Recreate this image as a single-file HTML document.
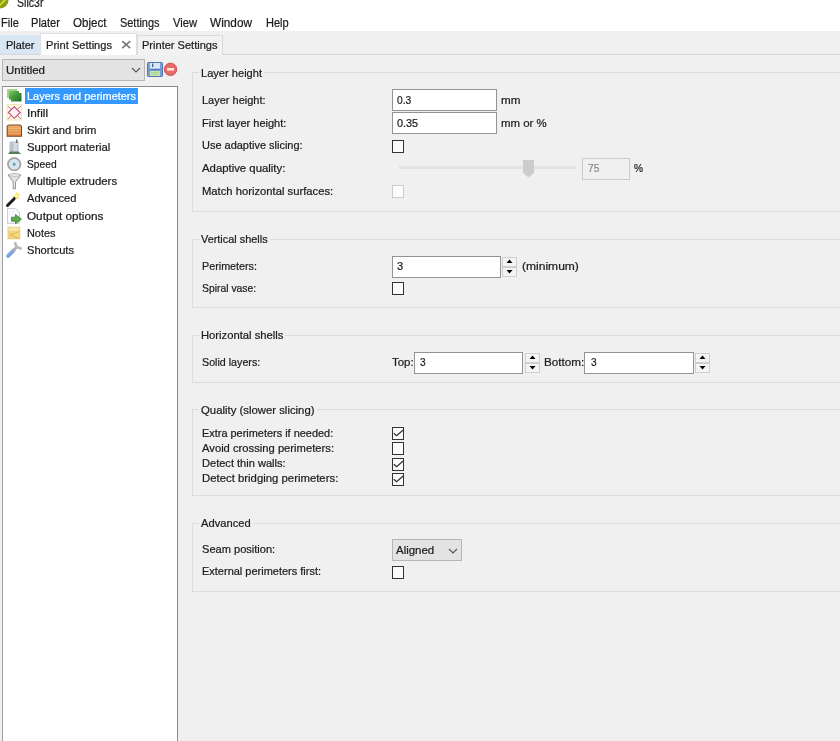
<!DOCTYPE html>
<html><head><meta charset="utf-8">
<style>
*{box-sizing:border-box}
html,body{margin:0;padding:0;width:840px;height:741px;overflow:hidden;background:#f0f0f0;font-family:"Liberation Sans",sans-serif;font-size:11px;color:#1c1c1c}
.a{position:absolute}
.t{position:absolute;white-space:nowrap;line-height:13px;font-size:11px;transform-origin:0 0;-webkit-text-stroke:0.22px currentColor}
.gtb{position:absolute;height:13px;background:#f0f0f0}
.gb{position:absolute;border:1px solid #dcdcdc;left:192px;width:700px}
.gt{position:absolute;background:#f0f0f0;padding:0 4px 0 2px;white-space:nowrap;line-height:13px;-webkit-text-stroke:0.12px currentColor}
.tb{position:absolute;background:#fff;border:1px solid #939393}
.cb{position:absolute;width:12px;height:13px;border:1px solid #333;background:#fbfbfb}
.ic{filter:blur(0.25px)}
.sp{position:absolute;width:14px;border:1px solid #d0d0d0;background:#f0f0f0}
</style></head><body>
<!-- title + menu -->
<div class="a" style="left:0;top:0;width:840px;height:31px;background:#fff"></div>
<svg class="a" style="left:0;top:0" width="10" height="10"><circle cx="0" cy="0" r="8.5" fill="#8c9a12"/><path d="M-2 7 L7 -2" stroke="#c9d23c" stroke-width="2.2"/></svg>
<div class="t" style="left:17px;top:-3px;transform:scaleX(0.8800);font-size:12px">Slic3r</div>
<div class="t" style="left:1px;top:17px;transform:scaleX(0.9200);font-size:12px">File</div>
<div class="t" style="left:31px;top:17px;transform:scaleX(0.9248);font-size:12px">Plater</div>
<div class="t" style="left:73px;top:17px;transform:scaleX(0.9629);font-size:12px">Object</div>
<div class="t" style="left:120px;top:17px;transform:scaleX(0.9110);font-size:12px">Settings</div>
<div class="t" style="left:173px;top:17px;transform:scaleX(0.9303);font-size:12px">View</div>
<div class="t" style="left:210px;top:17px;transform:scaleX(0.9839);font-size:12px">Window</div>
<div class="t" style="left:266px;top:17px;transform:scaleX(0.9200);font-size:12px">Help</div>

<!-- tabs -->
<div class="a" style="left:0;top:54px;width:840px;height:1px;background:#d9d9d9"></div>
<div class="a" style="left:0;top:35px;width:41px;height:19px;background:#d9e7f4"></div>
<div class="t" style="left:6px;top:39px;transform:scaleX(0.9913)">Plater</div>
<div class="a" style="left:40px;top:33px;width:97px;height:22px;background:#fff;border:1px solid #e0e0e0;border-bottom:none"></div>
<div class="t" style="left:46px;top:39px;transform:scaleX(1.0088)">Print Settings</div>
<svg class="a" style="left:121px;top:40px" width="11" height="10"><path d="M1.2 1.2 L9.2 8.2 M9.2 1.2 L1.2 8.2" stroke="#7a7a7a" stroke-width="1.7"/></svg>
<div class="a" style="left:137px;top:35px;width:86px;height:20px;border:1px solid #d9d9d9;border-bottom:none;background:#f2f2f2"></div>
<div class="t" style="left:142px;top:39px;transform:scaleX(1.0039)">Printer Settings</div>

<!-- left panel -->
<div class="a" style="left:2px;top:59px;width:143px;height:22px;border:1px solid #b6b6b6;background:#e3e3e3"></div>
<div class="t" style="left:6px;top:64px;transform:scaleX(1.0457)">Untitled</div>
<svg class="a" style="left:131px;top:67px" width="10" height="6"><path d="M1 1 L5 5 L9 1" fill="none" stroke="#555" stroke-width="1.1"/></svg>
<!-- save icon -->
<svg class="a ic" style="left:146px;top:61px" width="18" height="17">
<rect x="1.5" y="1.5" width="15" height="14" rx="0.8" fill="#7b9ed6" stroke="#5076b4" stroke-width="1"/>
<rect x="4" y="2" width="10" height="5.5" fill="#d8e8f8"/>
<rect x="6" y="2.5" width="1.3" height="3.5" fill="#47628c"/>
<rect x="3.5" y="8" width="11" height="1.2" fill="#5a7cb8"/>
<rect x="4" y="10" width="10" height="5" fill="#c6e6b0"/>
<path d="M5 11.5 H13 M5 13.3 H13" stroke="#9cc886" stroke-width="0.6"/>
</svg>
<svg class="a ic" style="left:163px;top:62px" width="15" height="15">
<circle cx="7.5" cy="7.3" r="6.2" fill="#e66a6a" stroke="#d55050" stroke-width="1"/>
<rect x="4" y="6" width="7" height="2.6" fill="#fbe6dc"/>
</svg>
<div class="a" style="left:2px;top:86px;width:176px;height:700px;border:1px solid #8a8a8a;border-left-color:#a0a0a0;background:#fff"></div>
<div class="a" style="left:25px;top:88px;width:113px;height:16px;background:#3399ff"></div>
<div class="t" style="left:27px;top:90px;transform:scaleX(0.9959);color:#fff">Layers and perimeters</div>
<div class="t" style="left:27px;top:107px;transform:scaleX(1.0735)">Infill</div>
<div class="t" style="left:27px;top:124px;transform:scaleX(1.0212)">Skirt and brim</div>
<div class="t" style="left:27px;top:141px;transform:scaleX(1.0320)">Support material</div>
<div class="t" style="left:27px;top:158px;transform:scaleX(0.9305)">Speed</div>
<div class="t" style="left:27px;top:175px;transform:scaleX(1.0377)">Multiple extruders</div>
<div class="t" style="left:27px;top:192px;transform:scaleX(1.0115)">Advanced</div>
<div class="t" style="left:27px;top:210px;transform:scaleX(1.0662)">Output options</div>
<div class="t" style="left:27px;top:227px;transform:scaleX(0.9913)">Notes</div>
<div class="t" style="left:27px;top:244px;transform:scaleX(1.0114)">Shortcuts</div>
<!-- icons -->
<svg class="a ic" style="left:0;top:80px" width="30" height="185" viewBox="0 80 30 185">
<defs>
<linearGradient id="gr" x1="0" y1="0" x2="1" y2="1"><stop offset="0" stop-color="#9fd28a"/><stop offset="0.5" stop-color="#4aa040"/><stop offset="1" stop-color="#1f6e22"/></linearGradient>
<linearGradient id="or" x1="0" y1="0" x2="0" y2="1"><stop offset="0" stop-color="#f0b070"/><stop offset="1" stop-color="#e0823a"/></linearGradient>
<linearGradient id="bl" x1="0" y1="0" x2="1" y2="1"><stop offset="0" stop-color="#a8c8f0"/><stop offset="1" stop-color="#5a86d0"/></linearGradient>
</defs>
<!-- layers -->
<path d="M7 89 H17 V91 H19 V93 H21.5 V101.5 H11 V99.5 H9 V97.5 H7 Z" fill="url(#gr)"/>
<path d="M7 89 H17 V91 H9 V97.5 H7 Z" fill="#a8d890" opacity="0.8"/>
<!-- infill -->
<rect x="7" y="104.5" width="14.5" height="15.5" fill="#fffbe6" stroke="#f3e6b0" stroke-width="1"/>
<path d="M14.3 106.8 L20.2 112.5 L14.3 118.3 L8.3 112.5 Z" fill="#fdf3f6" stroke="#c04a78" stroke-width="1.1"/>
<path d="M7.8 106 L11.3 109.5 M20.8 106 L17.3 109.5 M7.8 119 L11.3 115.5 M20.8 119 L17.3 115.5" stroke="#c4668a" stroke-width="1"/>
<!-- skirt -->
<path d="M7.2 127 Q7.2 125 9.5 125 H19.5 Q21.5 125 21.5 127 V136.3 H7.2 Z" fill="url(#or)" stroke="#7a4a20" stroke-width="1.1"/>
<path d="M8 128.5 H21 M8 131 H21 M8 133.5 H21" stroke="#f5c08a" stroke-width="0.6"/>
<!-- support -->
<rect x="10" y="142" width="8" height="10.5" fill="#d4dbe8" stroke="#a8b0be" stroke-width="0.8"/>
<rect x="10.5" y="143" width="3" height="9" fill="#b8c0cc"/>
<rect x="16" y="139.5" width="1.5" height="3.5" fill="#707070"/>
<path d="M8 154 L10 151.5 H18.5 L21 154 Z" fill="#5a7a5a"/>
<!-- speed -->
<circle cx="14.2" cy="164.2" r="6.2" fill="#dfe6ea" stroke="#a8a8a8" stroke-width="1.9"/>
<circle cx="14.2" cy="164.2" r="4" fill="#cfe6f2"/>
<path d="M13.2 162.2 L16.2 164.2 L13.2 166.3 Z" fill="#5f8fb0"/>
<!-- funnel -->
<path d="M8 175 Q14.5 172.5 21 175 L15.5 182 V188.8 H13.2 V182 Z" fill="#e4e4e4" stroke="#8c8c8c" stroke-width="0.9"/>
<ellipse cx="14.5" cy="175" rx="5.5" ry="1.3" fill="#f4f4f4" stroke="#9a9a9a" stroke-width="0.6"/>
<!-- wand -->
<path d="M7.5 205.5 L15 198" stroke="#1a1a1a" stroke-width="3" stroke-linecap="round"/>
<path d="M16.5 191.5 L17.3 194.5 L20.5 194 L18 196 L20 198.8 L17 197.6 L15.5 200.3 L15.2 197.3 L12.4 196.4 L15.2 195 Z" fill="#f8dc40"/>
<circle cx="16.4" cy="196" r="1.5" fill="#fff7c0"/>
<!-- output -->
<path d="M7.5 208.5 H15.5 L19.5 212.5 V223.3 H7.5 Z" fill="#f7f8fb" stroke="#c4c8d0" stroke-width="0.9"/>
<path d="M11.5 217.2 H15.5 V214.5 L21.5 219.2 L15.5 223.8 V221.2 H11.5 Z" fill="#5aac4a" stroke="#357a2a" stroke-width="0.7"/>
<!-- notes -->
<rect x="8" y="227.2" width="11.8" height="11.6" fill="#f5d684" stroke="#e3c063" stroke-width="0.8"/>
<rect x="8.4" y="227.6" width="11" height="3" fill="#f8e6b0"/>
<path d="M19 231.5 L10 235 L19 238.5" fill="none" stroke="#e0b84a" stroke-width="1"/>
<!-- wrench -->
<path d="M8 255.8 L13.5 250.3" stroke="url(#bl)" stroke-width="4" stroke-linecap="round"/>
<path d="M12.8 251 L16.8 247" stroke="#aeb2ba" stroke-width="2.8"/>
<path d="M15.2 243.2 L16.8 247 L20.8 248.4" fill="none" stroke="#b4b8c0" stroke-width="2.6" stroke-linecap="round" stroke-linejoin="round"/>
</svg>
<!-- group 1 -->
<div class="gb" style="top:72px;height:140px"></div>
<div class="gtb" style="left:199px;top:67px;width:65.0px"></div><div class="t" style="left:201px;top:67px;transform:scaleX(1.0075)">Layer height</div>
<div class="t" style="left:202px;top:94px;transform:scaleX(0.9983)">Layer height:</div>
<div class="t" style="left:202px;top:117px;transform:scaleX(0.9991)">First layer height:</div>
<div class="t" style="left:202px;top:139px;transform:scaleX(0.9971)">Use adaptive slicing:</div>
<div class="t" style="left:202px;top:162px;transform:scaleX(1.0320)">Adaptive quality:</div>
<div class="t" style="left:202px;top:185px;transform:scaleX(1.0219)">Match horizontal surfaces:</div>
<div class="tb" style="left:392px;top:89px;width:105px;height:22px"></div>
<div class="t" style="left:397px;top:94px;transform:scaleX(0.9283)">0.3</div>
<div class="t" style="left:501px;top:94px;transform:scaleX(1.0600)">mm</div>
<div class="tb" style="left:392px;top:112px;width:105px;height:22px"></div>
<div class="t" style="left:397px;top:117px;transform:scaleX(0.9850)">0.35</div>
<div class="t" style="left:501px;top:117px;transform:scaleX(1.0386)">mm or %</div>
<div class="cb" style="left:392px;top:140px"></div>
<div class="a" style="left:399px;top:166px;width:177px;height:3px;background:#e3e3e3"></div>
<svg class="a" style="left:523px;top:160px" width="11" height="18"><path d="M0 0 H11 V13 L5.5 17.5 L0 13 Z" fill="#cccccc"/></svg>
<div class="a" style="left:582px;top:158px;width:48px;height:22px;border:1px solid #cccccc;background:#f0f0f0"></div>
<div class="t" style="left:588px;top:162px;transform:scaleX(0.9306);color:#8a8a8a">75</div>
<div class="t" style="left:634px;top:162px;transform:scaleX(0.9201)">%</div>
<div class="a" style="left:392px;top:185px;width:12px;height:13px;border:1px solid #cccccc;background:#fcfcfc"></div>

<!-- group 2 -->
<div class="gb" style="top:239px;height:69px"></div>
<div class="gtb" style="left:199px;top:233px;width:70.6px"></div><div class="t" style="left:201px;top:233px;transform:scaleX(0.9901)">Vertical shells</div>
<div class="t" style="left:202px;top:260px;transform:scaleX(0.9778)">Perimeters:</div>
<div class="t" style="left:202px;top:282px;transform:scaleX(0.9429)">Spiral vase:</div>
<div class="tb" style="left:392px;top:256px;width:109px;height:22px"></div>
<div class="t" style="left:397px;top:260px;transform:scaleX(1.0122)">3</div>
<div class="a" style="left:502px;top:257px;width:15px;height:10px;border:1px solid #cfcfcf;background:#f4f4f4"></div><div class="a" style="left:502px;top:267px;width:15px;height:10px;border:1px solid #cfcfcf;background:#f4f4f4"></div><svg class="a" style="left:502px;top:257px" width="15" height="20"><path d="M4.5 6 L10.5 6 L7.5 2.5 Z M4.5 13 L10.5 13 L7.5 16.5 Z" fill="#000"/></svg>
<div class="t" style="left:522px;top:260px;transform:scaleX(1.0952)">(minimum)</div>
<div class="cb" style="left:392px;top:282px"></div>

<!-- group 3 -->
<div class="gb" style="top:335px;height:48px"></div>
<div class="gtb" style="left:199px;top:329px;width:86.4px"></div><div class="t" style="left:201px;top:329px;transform:scaleX(1.0210)">Horizontal shells</div>
<div class="t" style="left:202px;top:356px;transform:scaleX(0.9713)">Solid layers:</div>
<div class="t" style="left:392px;top:356px;transform:scaleX(1.0386)">Top:</div>
<div class="tb" style="left:414px;top:352px;width:109px;height:22px"></div>
<div class="t" style="left:420px;top:356px;transform:scaleX(0.9200)">3</div>
<div class="a" style="left:525px;top:353px;width:15px;height:10px;border:1px solid #cfcfcf;background:#f4f4f4"></div><div class="a" style="left:525px;top:363px;width:15px;height:10px;border:1px solid #cfcfcf;background:#f4f4f4"></div><svg class="a" style="left:525px;top:353px" width="15" height="20"><path d="M4.5 6 L10.5 6 L7.5 2.5 Z M4.5 13 L10.5 13 L7.5 16.5 Z" fill="#000"/></svg>
<div class="t" style="left:544px;top:356px;transform:scaleX(1.0631)">Bottom:</div>
<div class="tb" style="left:584px;top:352px;width:110px;height:22px"></div>
<div class="t" style="left:591px;top:356px;transform:scaleX(0.9200)">3</div>
<div class="a" style="left:695px;top:353px;width:15px;height:10px;border:1px solid #cfcfcf;background:#f4f4f4"></div><div class="a" style="left:695px;top:363px;width:15px;height:10px;border:1px solid #cfcfcf;background:#f4f4f4"></div><svg class="a" style="left:695px;top:353px" width="15" height="20"><path d="M4.5 6 L10.5 6 L7.5 2.5 Z M4.5 13 L10.5 13 L7.5 16.5 Z" fill="#000"/></svg>

<!-- group 4 -->
<div class="gb" style="top:409px;height:87px"></div>
<div class="gtb" style="left:199px;top:404px;width:117.5px"></div><div class="t" style="left:201px;top:404px;transform:scaleX(1.0315)">Quality (slower slicing)</div>
<div class="t" style="left:202px;top:427px;transform:scaleX(0.9934)">Extra perimeters if needed:</div>
<div class="t" style="left:202px;top:442px;transform:scaleX(1.0200)">Avoid crossing perimeters:</div>
<div class="t" style="left:202px;top:457px;transform:scaleX(1.0053)">Detect thin walls:</div>
<div class="t" style="left:202px;top:472px;transform:scaleX(1.0321)">Detect bridging perimeters:</div>
<div class="cb" style="left:392px;top:427px"></div><svg class="a" style="left:392px;top:427px" width="13" height="13"><path d="M1.8 6.2 L4.6 8.7 L11.2 3.1" fill="none" stroke="#333" stroke-width="1.3"/></svg>
<div class="cb" style="left:392px;top:442px"></div>
<div class="cb" style="left:392px;top:458px"></div><svg class="a" style="left:392px;top:458px" width="13" height="13"><path d="M1.8 6.2 L4.6 8.7 L11.2 3.1" fill="none" stroke="#333" stroke-width="1.3"/></svg>
<div class="cb" style="left:392px;top:473px"></div><svg class="a" style="left:392px;top:473px" width="13" height="13"><path d="M1.8 6.2 L4.6 8.7 L11.2 3.1" fill="none" stroke="#333" stroke-width="1.3"/></svg>

<!-- group 5 -->
<div class="gb" style="top:523px;height:69px"></div>
<div class="gtb" style="left:199px;top:517px;width:53.7px"></div><div class="t" style="left:201px;top:517px;transform:scaleX(1.0156)">Advanced</div>
<div class="t" style="left:202px;top:543px;transform:scaleX(1.0060)">Seam position:</div>
<div class="t" style="left:202px;top:565px;transform:scaleX(0.9983)">External perimeters first:</div>
<div class="a" style="left:392px;top:539px;width:70px;height:22px;border:1px solid #b6b6b6;background:#e3e3e3"></div>
<div class="t" style="left:396px;top:544px;transform:scaleX(1.0408)">Aligned</div>
<svg class="a" style="left:448px;top:548px" width="10" height="6"><path d="M1 1 L5 5 L9 1" fill="none" stroke="#555" stroke-width="1.1"/></svg>
<div class="cb" style="left:392px;top:566px"></div>
</body></html>
